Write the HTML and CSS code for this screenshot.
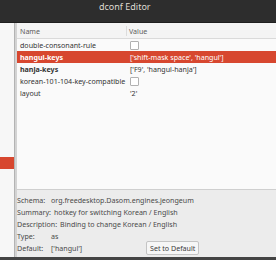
FILE: index.html
```html
<!DOCTYPE html>
<html lang="en">

<head>
    <meta charset="UTF-8">
    <title>dconf Editor</title>
    <link rel="stylesheet" href="styles.css">
</head>

<body>
    <div class="window">
        <div class="titlebar">dconf Editor</div>
        <div class="main">
            <div class="sidebar">
                <div class="side-sel"></div>
            </div>
            <div class="pane-handle"></div>
            <div class="content">
                <div class="keys">
                    <div class="keys-head">
                        <div class="col-name">Name</div>
                        <div class="col-value">Value</div>
                    </div>
                    <div class="key-row">
                        <div class="col-name">double-consonant-rule</div>
                        <div class="col-value"><span class="check"></span></div>
                    </div>
                    <div class="key-row selected">
                        <div class="col-name bold">hangul-keys</div>
                        <div class="col-value">['shift-mask space', 'hangul']</div>
                    </div>
                    <div class="key-row">
                        <div class="col-name bold">hanja-keys</div>
                        <div class="col-value">['F9', 'hangul-hanja']</div>
                    </div>
                    <div class="key-row">
                        <div class="col-name">korean-101-104-key-compatible</div>
                        <div class="col-value"><span class="check"></span></div>
                    </div>
                    <div class="key-row">
                        <div class="col-name">layout</div>
                        <div class="col-value">'2'</div>
                    </div>
                </div>
                <div class="info">
                    <div class="info-row">
                        <span class="label">Schema:</span>
                        <span>org.freedesktop.Dasom.engines.jeongeum</span>
                    </div>
                    <div class="info-row">
                        <span class="label">Summary:</span>
                        <span>hotkey for switching Korean / English</span>
                    </div>
                    <div class="info-row">
                        <span class="label">Description:</span>
                        <span>Binding to change Korean / English</span>
                    </div>
                    <div class="info-row">
                        <span class="label">Type:</span>
                        <span>as</span>
                    </div>
                    <div class="info-row last">
                        <span class="label">Default:</span>
                        <span class="default-val">['hangul']</span>
                        <button class="btn">Set to Default</button>
                    </div>
                </div>
            </div>
        </div>
        <div class="bottom-edge"></div>
    </div>
</body>

</html>
```

FILE: styles.css
```css
* {
    margin: 0;
    padding: 0;
    box-sizing: border-box;
}

body {
    width: 276px;
    height: 260px;
    overflow: hidden;
    background-color: #ececec;
    font-family: "Noto Sans", "Open Sans", sans-serif;
    font-size: 7.1px;
    color: #3c3c3c;
}

.window {
    display: flex;
    flex-direction: column;
    height: 260px;
}

.titlebar {
    height: 23px;
    padding-left: 99px;
    padding-top: 1px;
    line-height: 11px;
    font-size: 9px;
    color: #dfdbd2;
    background-color: #2d2d2d;
    border-bottom: 1px solid #1f1f1f;
}

.main {
    display: flex;
    flex: 1;
}

.sidebar {
    width: 14px;
    padding-top: 134px;
    background-color: #f7f7f7;
}

.side-sel {
    height: 12px;
    background-color: #d7472f;
}

/* 拖动条 */
.pane-handle {
    width: 3px;
    background-color: #d3d3d3;
    border-left: 1px solid #b3b3b3;
}

.content {
    flex: 1;
    display: flex;
    flex-direction: column;
}

.keys {
    height: 167px;
    background-color: #fafafa;
    border-bottom: 1px solid #cfcfcf;
}

.keys-head {
    display: flex;
    height: 16px;
    align-items: center;
    color: #5d5d5d;
    background-color: #f4f4f4;
    border-bottom: 1px solid #dadada;
}

.keys-head .col-name {
    width: 109px;
}

.keys-head .col-value {
    border-left: 1px solid #dcdcdc;
    padding-left: 2px;
}

.key-row {
    display: flex;
    height: 12px;
    align-items: center;
    color: #333;
}

.col-name {
    flex: 0 0 auto;
    width: 110px;
    padding-left: 3px;
    white-space: nowrap;
}

.col-value {
    flex: 1;
    padding-left: 3px;
    white-space: nowrap;
}

.bold {
    font-weight: bold;
}

.selected {
    color: #fff;
    background-color: #d7472f;
}

.check {
    display: block;
    width: 9px;
    height: 9px;
    background-color: #fff;
    border: 1px solid #b1b1b1;
    border-radius: 1px;
}

.info {
    flex: 1;
    padding-top: 4px;
    color: #4a4a4a;
}

.info-row {
    display: flex;
    align-items: center;
    height: 12px;
    white-space: nowrap;
}

.info-row.last {
    height: 14px;
    margin-top: -1px;
}

.label {
    flex-shrink: 0;
    min-width: 34px;
    padding-right: 3px;
}

.default-val {
    width: 95px;
}

.btn {
    height: 14px;
    padding: 0 3px;
    font-family: inherit;
    font-size: 7.1px;
    color: #3c3c3c;
    background-color: #f6f6f6;
    border: 1px solid #c4c4c4;
    border-radius: 2px;
}

.bottom-edge {
    height: 3px;
    background-color: #444;
}
```
